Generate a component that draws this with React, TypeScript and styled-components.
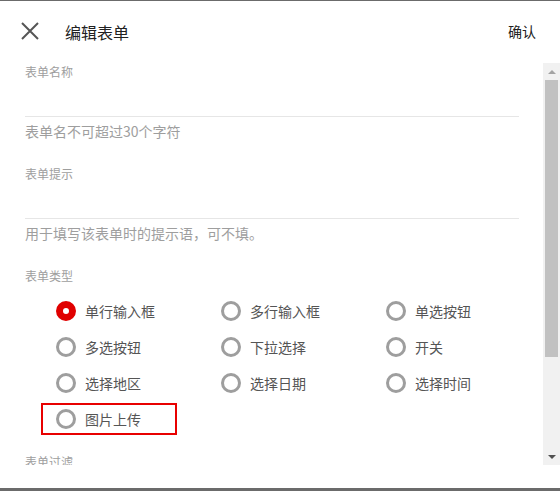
import styled, { createGlobalStyle } from 'styled-components';

const types = [
  { name: '单行输入框', checked: true },
  { name: '多行输入框' },
  { name: '单选按钮' },
  { name: '多选按钮' },
  { name: '下拉选择' },
  { name: '开关' },
  { name: '选择地区' },
  { name: '选择日期' },
  { name: '选择时间' },
  { name: '图片上传', marked: true },
];

const fields = [
  { label: '表单名称', help: '表单名不可超过30个字符' },
  { label: '表单提示', help: '用于填写该表单时的提示语，可不填。' },
];

const App = () => {
  return (
    <>
      <GlobalStyle />
      <Dialog>
        <Header>
          <CloseButton aria-label="close">
            <svg width="18" height="18" viewBox="0 0 18 18">
              <path d="M1 1 L17 17 M17 1 L1 17" stroke="#555" strokeWidth="2" />
            </svg>
          </CloseButton>
          <Title>编辑表单</Title>
          <Confirm>确认</Confirm>
        </Header>
        <BodyRow>
          <Body>
            {fields.map((field) => (
              <Field key={field.label}>
                <Label>{field.label}</Label>
                <Input />
                <Help>{field.help}</Help>
              </Field>
            ))}
            <Label>表单类型</Label>
            <RadioGrid>
              {types.map((type) => (
                <RadioItem key={type.name} marked={type.marked}>
                  <RadioDot checked={type.checked} />
                  <RadioText>{type.name}</RadioText>
                </RadioItem>
              ))}
            </RadioGrid>
            <Field>
              <Label>表单过滤</Label>
              <Input />
              <Help>选填</Help>
            </Field>
          </Body>
          <ScrollBar>
            <ArrowButton>
              <Arrow up />
            </ArrowButton>
            <Rail>
              <Thumb />
            </Rail>
            <ArrowButton>
              <Arrow />
            </ArrowButton>
          </ScrollBar>
        </BodyRow>
      </Dialog>
    </>
  );
};

export default App;

const GlobalStyle = createGlobalStyle`
  html, body {
    margin: 0;
    padding: 0;
    background: #6b6b6b;
    font-family: 'Noto Sans CJK SC', 'Noto Sans', sans-serif;
  }
  * {
    box-sizing: border-box;
  }
`;

const Dialog = styled.div`
  margin-top: 1px;
  width: 560px;
  height: 487px;
  background: #fff;
  display: flex;
  flex-direction: column;
`;

const Header = styled.div`
  height: 62px;
  flex: none;
  display: flex;
  align-items: center;
  padding: 0 24px 0 21px;
`;

const CloseButton = styled.div`
  width: 18px;
  height: 18px;
  display: flex;
  margin-top: -2px;
  cursor: pointer;
`;

const Title = styled.h1`
  margin: 0 0 0 26px;
  font-size: 16px;
  font-weight: 400;
  line-height: 22px;
  color: #212121;
  flex: 1;
`;

const Confirm = styled.span`
  font-size: 14px;
  line-height: 20px;
  color: #212121;
  margin-top: -2px;
`;

const BodyRow = styled.div`
  height: 402px;
  flex: none;
  display: flex;
`;

const Body = styled.div`
  flex: 1;
  overflow: hidden;
  padding: 2px 24px 0 25px;
`;

const ScrollBar = styled.div`
  width: 17px;
  flex: none;
  display: flex;
  flex-direction: column;
  background: #f1f1f1;
`;

const ArrowButton = styled.div`
  height: 17px;
  flex: none;
  display: flex;
  align-items: center;
  justify-content: center;
`;

const Arrow = styled.span<{ up?: boolean }>`
  width: 0;
  height: 0;
  border-left: 4px solid transparent;
  border-right: 4px solid transparent;
  ${(props) =>
    props.up
      ? 'border-bottom: 4px solid #a3a3a3;'
      : 'border-top: 4px solid #505050;'}
`;

const Rail = styled.div`
  flex: 1;
`;

const Thumb = styled.div`
  height: 277px;
  margin: 0 2px;
  background: #c1c1c1;
`;

const Field = styled.div`
  margin-bottom: 26px;
`;

const Label = styled.div`
  font-size: 12px;
  line-height: 14px;
  color: #9e9e9e;
`;

const Input = styled.div`
  height: 38px;
  border-bottom: 1px solid #e6e6e6;
`;

const Help = styled.div`
  margin-top: 4px;
  font-size: 14px;
  line-height: 20px;
  color: #9e9e9e;
`;

const RadioGrid = styled.div`
  display: grid;
  grid-template-columns: repeat(3, 165px);
  row-gap: 4px;
  margin: 12px 0 20px 16px;
`;

const RadioItem = styled.div<{ marked?: boolean }>`
  width: 136px;
  height: 32px;
  display: flex;
  align-items: center;
  padding-left: 13px;
  border: 2px solid ${(props) => (props.marked ? '#e80000' : 'transparent')};
`;

const RadioDot = styled.span<{ checked?: boolean }>`
  width: 20px;
  height: 20px;
  flex: none;
  border-radius: 50%;
  background: #fff;
  border: ${(props) => (props.checked ? '7px solid #e00000' : '3px solid #9e9e9e')};
`;

const RadioText = styled.span`
  margin-left: 9px;
  font-size: 14px;
  line-height: 20px;
  color: #555;
`;
